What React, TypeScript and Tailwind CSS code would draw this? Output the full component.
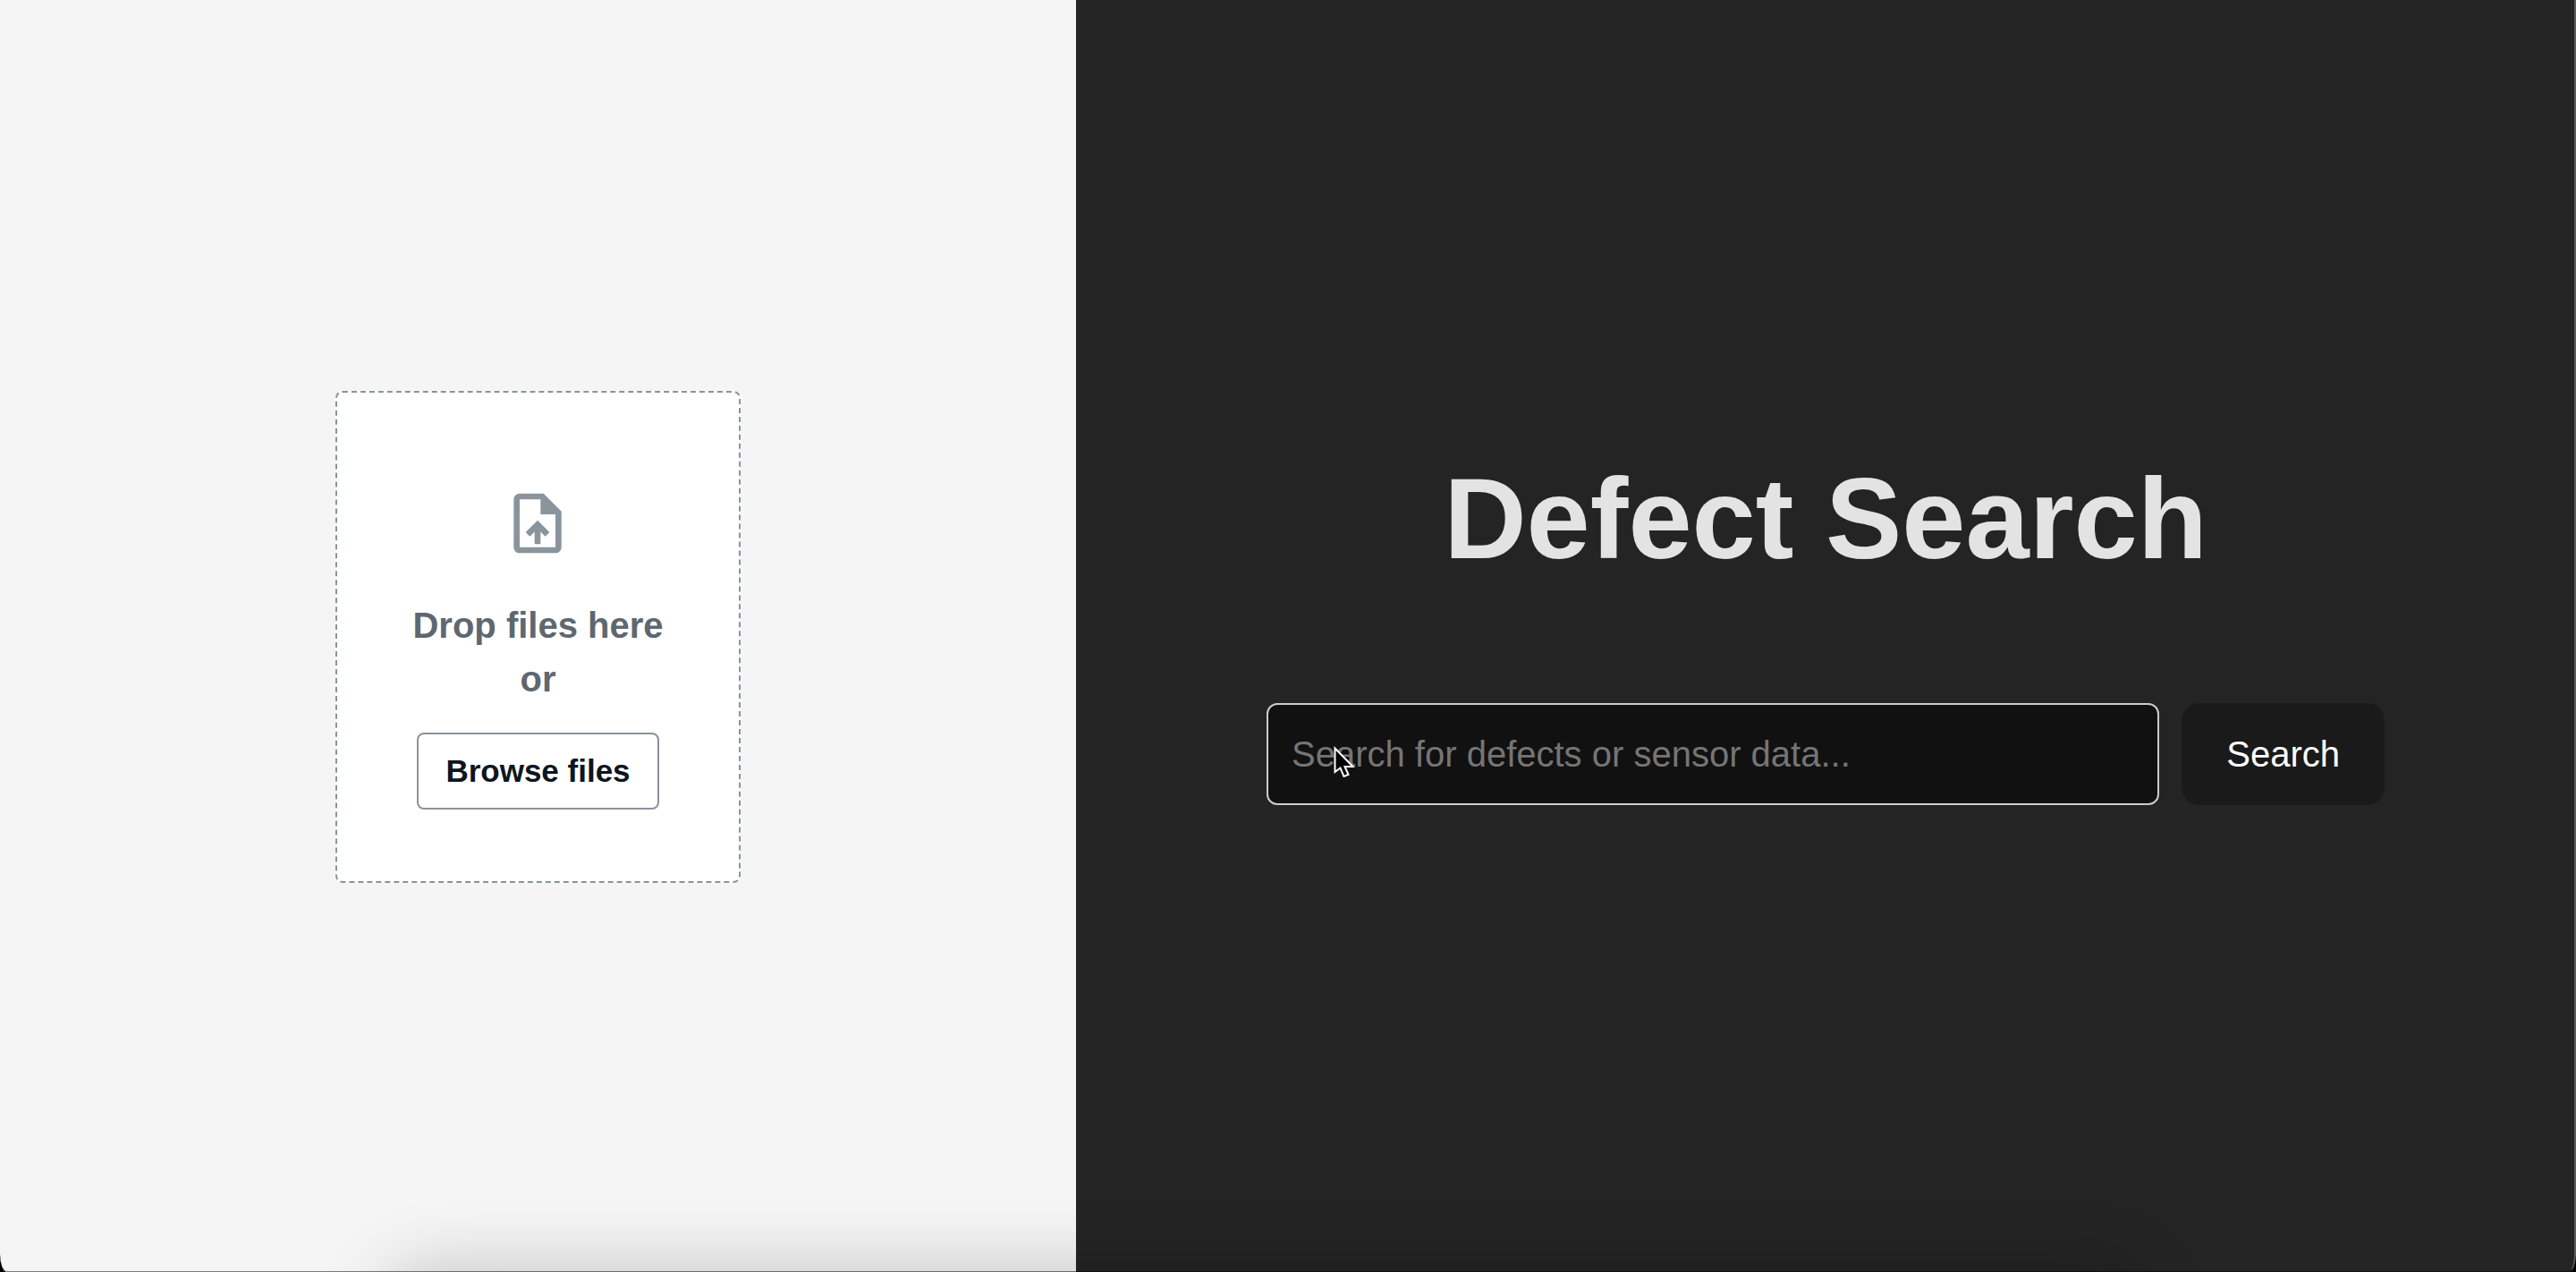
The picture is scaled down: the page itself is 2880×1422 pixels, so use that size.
function UploadFileIcon() {
  return (
    <svg viewBox="0 0 24 24" className="size-20 fill-[#8a949d]" aria-hidden="true">
      <path d="M14 2H6c-1.1 0-1.99.9-1.99 2L4 20c0 1.1.89 2 1.99 2H18c1.1 0 2-.9 2-2V8l-6-6zm4 18H6V4h7v5h5v11zM8 15.01l1.41 1.41L11 14.84V19h2v-4.16l1.59 1.59L16 15.01 12.01 11z" />
    </svg>
  );
}

function Pointer() {
  return (
    <svg
      viewBox="0 0 26 38"
      className="pointer-events-none absolute top-[46px] left-[74px] h-[38px] w-[26px]"
      aria-hidden="true"
    >
      <path
        d="M2.500 4.500V31L8.500 26.500 12.500 36 17.500 34 13.500 25H22.500z"
        fill="#000"
        stroke="#fff"
        strokeWidth="2"
      />
    </svg>
  );
}

function DropZone() {
  return (
    <div className="flex flex-col items-center rounded-lg border-2 border-dashed border-[#8a949d] bg-white px-[84px] pt-[106px] pb-20">
      <UploadFileIcon />
      <p className="mt-11 text-center text-[40px] leading-[60px] font-bold text-[#5f6770]">
        Drop files here
        <br />
        or
      </p>
      <button
        type="button"
        className="mt-[30px] rounded-lg border-2 border-[#8a949d] px-[30px] py-[14px] text-[35px] leading-[54px] font-bold text-[#0d1620]"
      >
        Browse files
      </button>
    </div>
  );
}

function SearchPanel() {
  return (
    <div className="w-full max-w-[1250px] pb-3">
      <h1 className="text-center text-[128px] leading-[140px] font-bold text-[#e3e3e3]">
        Defect Search
      </h1>
      <form className="mt-[136px] flex gap-[25px]" onSubmit={(e) => e.preventDefault()}>
        <div className="relative min-w-0 flex-1">
          <input
            type="text"
            aria-label="Search for defects or sensor data"
            placeholder="Search for defects or sensor data..."
            className="h-[114px] w-full rounded-xl border-2 border-[#cccccc] bg-[#111111] px-[26px] text-[40px] text-white outline-none placeholder:text-[#757575]"
          />
          <Pointer />
        </div>
        <button
          type="submit"
          className="rounded-[20px] bg-[#1a1a1a] px-[50px] text-[40px] text-white"
        >
          Search
        </button>
      </form>
    </div>
  );
}

export default function App() {
  return (
    <div className="bg-black font-['Liberation_Sans',Arial,sans-serif]">
      <div className="relative flex min-h-screen overflow-hidden rounded-[0_0_8px_8px/0_0_20px_20px]">
        <aside className="flex w-[1203px] shrink-0 items-center justify-center bg-[#f5f5f5] pt-0.5">
          <DropZone />
        </aside>
        <main className="flex flex-1 items-center justify-center bg-[#242424] pr-px">
          <SearchPanel />
        </main>
        <div className="pointer-events-none absolute top-full right-[17%] left-[15%] h-40 rounded-[40px] shadow-[0_0_80px_rgba(0,0,0,0.22)]" />
        <div className="pointer-events-none absolute inset-0 rounded-[0_0_8px_8px/0_0_20px_20px] border-r-2 border-b border-r-white/25 border-b-black/50" />
      </div>
    </div>
  );
}
